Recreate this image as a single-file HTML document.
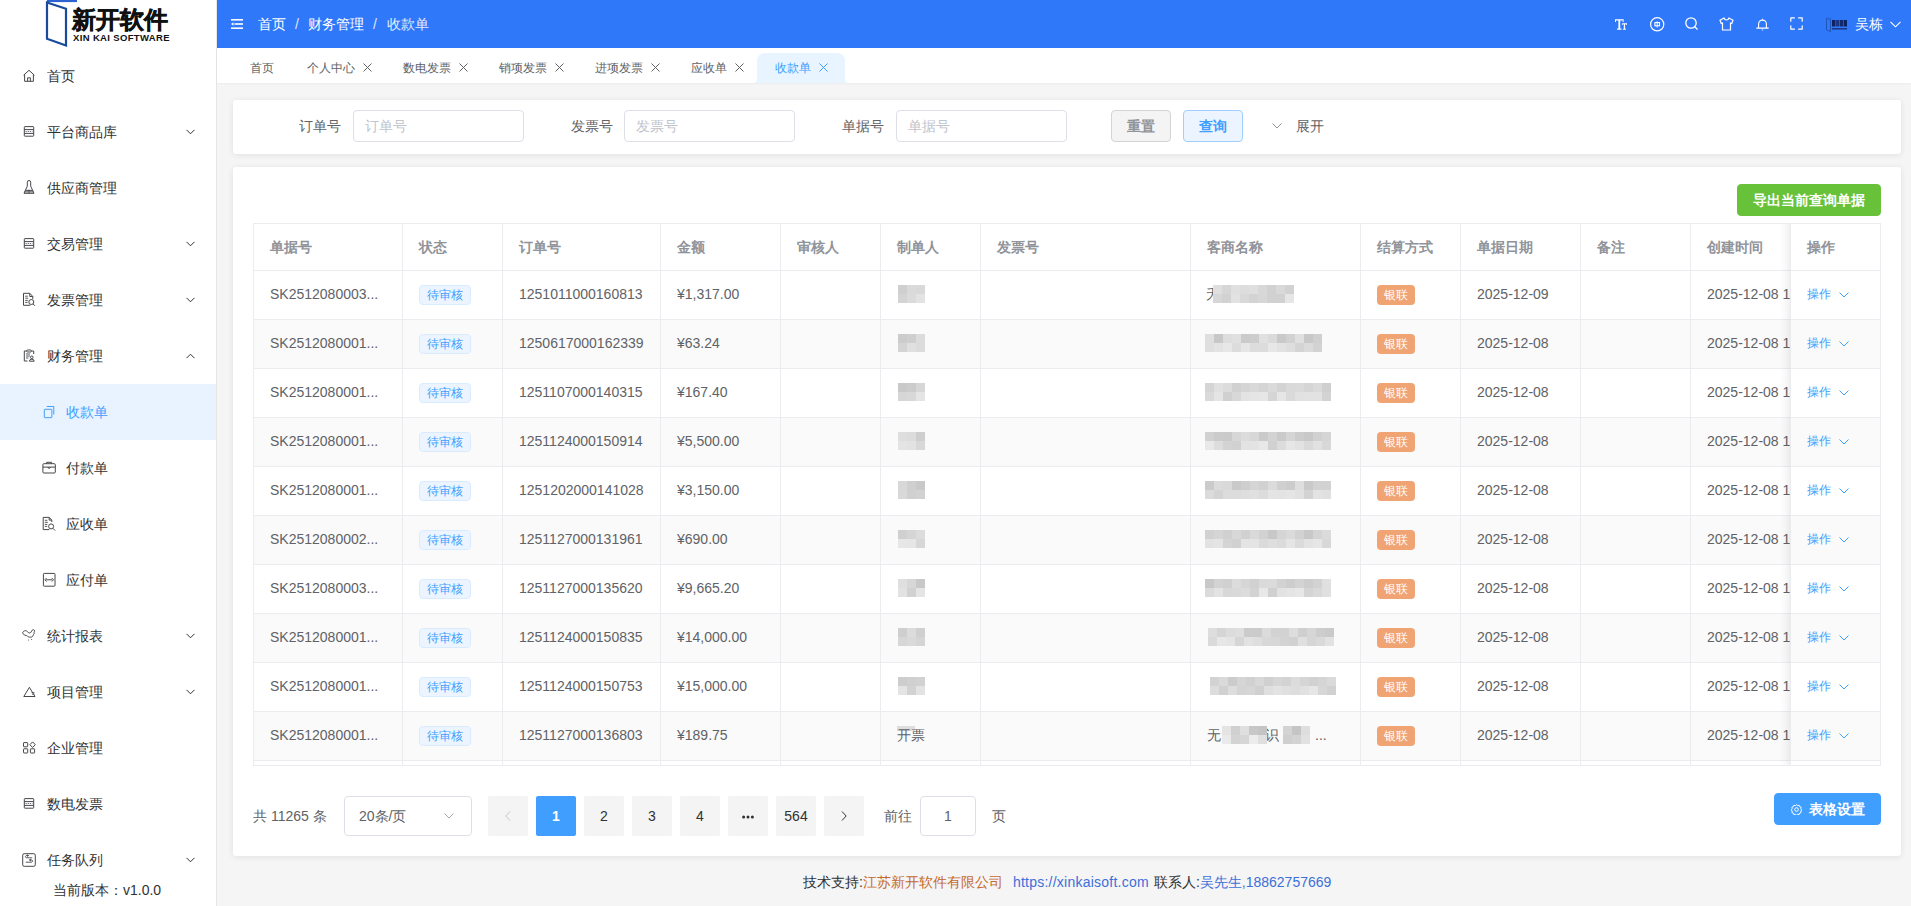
<!DOCTYPE html>
<html><head><meta charset="utf-8"><title>收款单</title>
<style>
*{box-sizing:border-box;margin:0;padding:0}
html,body{width:1911px;height:906px;overflow:hidden}
body{font-family:"Liberation Sans",sans-serif;font-size:14px;color:#606266;background:#f5f5f5;position:relative}
.abs{position:absolute}
#side{position:absolute;left:0;top:0;width:217px;height:906px;background:#fff;border-right:1px solid #e6e6e6}
.mi{position:absolute;left:0;width:216px;height:56px;color:#303133;font-size:14px}
.mi .ic{position:absolute;left:22px;top:21px;width:14px;height:14px;line-height:0}
.mi .tx{position:absolute;left:47px;top:0;line-height:56px;white-space:nowrap}
.mi.sub .ic{left:42px}
.mi.sub .tx{left:66px}
.mi .ch{position:absolute;left:186px;top:25px;width:9px;height:6px;line-height:0}
.mi.act{background:#e8f3ff;color:#409eff}
#hdr{position:absolute;left:217px;top:0;width:1694px;height:48px;background:#3078fa;color:#fff}
#tabs{position:absolute;left:217px;top:48px;width:1694px;height:35px;background:#fff;box-shadow:0 1px 2px rgba(0,0,0,.04)}
.tab{position:absolute;top:3px;height:34px;line-height:34px;font-size:12px;color:#606266;white-space:nowrap}
.tab .x{display:inline-block;vertical-align:middle;margin-left:8px;width:9px;height:9px;line-height:0;position:relative;top:-1px}
.card{position:absolute;left:233px;width:1668px;background:#fff;border-radius:3px;box-shadow:0 1px 6px rgba(0,0,0,.09)}
.lbl{position:absolute;top:10px;line-height:32px;font-size:14px;color:#606266}
.inp{position:absolute;top:10px;height:32px;width:171px;border:1px solid #dcdfe6;border-radius:4px;line-height:30px;padding-left:11px;color:#c0c4cc;font-size:14px}
.btn{position:absolute;height:32px;line-height:30px;text-align:center;border-radius:4px;font-size:14px;font-weight:bold}
#tbl{position:absolute;left:253px;top:223px;width:1628px;height:543px;overflow:hidden;border:1px solid #eaecf0;border-right:none}
.cell{position:absolute;height:49px;line-height:46px;white-space:nowrap;overflow:hidden;border-right:1px solid #eaecf0;border-bottom:1px solid #eaecf0;padding-left:16px;font-size:14px;color:#606266}
.hcell{color:#909399;font-weight:bold;height:47px;line-height:46px}
.tag{display:inline-block;vertical-align:middle;height:20px;line-height:18px;padding:0 7px;font-size:12px;border-radius:4px;border:1px solid #d9ecff;background:#ecf5ff;color:#409eff;position:relative;top:0px}
.tag2{display:inline-block;vertical-align:middle;height:20px;line-height:20px;padding:0 7px;font-size:12px;border-radius:4px;background:#f0a373;color:#fff;position:relative;top:0px}
.blk{position:absolute;height:18px}
.pg{position:absolute;top:796px;width:40px;height:40px;line-height:40px;text-align:center;background:#f4f4f5;color:#303133;font-size:14px;border-radius:2px}
</style></head><body>

<div id="side">
<svg class="abs" style="left:44px;top:0" width="36" height="48" viewBox="0 0 36 48">
<path d="M3 1H33" stroke="#2b64d0" stroke-width="2.2" fill="none"/>
<path d="M3 2.5L22 8.8V45.5L3 38.8Z" stroke="#1a4a9c" stroke-width="2.2" fill="none"/>
</svg>
<div class="abs" style="left:72px;top:6px;font-size:24px;font-weight:bold;color:#111;line-height:28px;white-space:nowrap;letter-spacing:0px;-webkit-text-stroke:0.5px #111">新开软件</div>
<div class="abs" style="left:73px;top:33px;font-size:9.5px;font-weight:bold;color:#111;line-height:10px;white-space:nowrap;letter-spacing:0.35px">XIN KAI SOFTWARE</div>
<div class="mi" style="top:48px"><div class="ic"><svg width="14" height="14" viewBox="0 0 14 14" style="overflow:visible" fill="none" stroke="#45474b" stroke-width="1"><path d="M1.6 6.2L7 1.3l5.4 4.9"/><path d="M2.6 5.4V12.3h8.8V5.4"/><path d="M5.6 12.3V8.8h2.8v3.5"/></svg></div><div class="tx">首页</div></div>
<div class="mi" style="top:104px"><div class="ic"><svg width="14" height="14" viewBox="0 0 14 14" style="overflow:visible" fill="none" stroke="#45474b" stroke-width="1"><rect x="2.3" y="1.6" width="9.4" height="9.6" rx="0.6"/><path d="M2.3 4.6h9.4M2.3 8.4h9.4"/><path d="M3.5 6.5h7" stroke-dasharray="1.2 1" stroke-width="0.8"/></svg></div><div class="tx">平台商品库</div><div class="ch"><svg width="9" height="6" viewBox="0 0 9 6" fill="none" stroke="#303133" stroke-width="1"><path d="M0.5 0.8L4.5 4.8 8.5 0.8"/></svg></div></div>
<div class="mi" style="top:160px"><div class="ic"><svg width="14" height="14" viewBox="0 0 14 14" style="overflow:visible" fill="none" stroke="#45474b" stroke-width="1"><path d="M5.3 1.2a1.7 1.7 0 0 1 3.4 0V5.2L12 12.3H2L5.3 5.2z"/><path d="M3.3 9.4h7.4M2.6 10.9h8.8"/><path d="M7 8.6v3.7" stroke-width="0.8"/></svg></div><div class="tx">供应商管理</div></div>
<div class="mi" style="top:216px"><div class="ic"><svg width="14" height="14" viewBox="0 0 14 14" style="overflow:visible" fill="none" stroke="#45474b" stroke-width="1"><rect x="2.3" y="1.6" width="9.4" height="9.6" rx="0.6"/><path d="M2.3 4.6h9.4M2.3 8.4h9.4"/><path d="M3.5 6.5h7" stroke-dasharray="1.2 1" stroke-width="0.8"/></svg></div><div class="tx">交易管理</div><div class="ch"><svg width="9" height="6" viewBox="0 0 9 6" fill="none" stroke="#303133" stroke-width="1"><path d="M0.5 0.8L4.5 4.8 8.5 0.8"/></svg></div></div>
<div class="mi" style="top:272px"><div class="ic"><svg width="14" height="14" viewBox="0 0 14 14" style="overflow:visible" fill="none" stroke="#45474b" stroke-width="1"><path d="M8.2 12.3H1.5V0.3h6.3l3 3.2V6"/><path d="M7.8 0.3v3.2h3"/><path d="M3.2 3.2h2.6M3.2 5.2h3M3.2 7.4h2.6M3.2 9.4h2.4" stroke-width="0.9"/><circle cx="9.3" cy="9" r="2.5"/><path d="M11.1 10.9l1.8 1.9"/></svg></div><div class="tx">发票管理</div><div class="ch"><svg width="9" height="6" viewBox="0 0 9 6" fill="none" stroke="#303133" stroke-width="1"><path d="M0.5 0.8L4.5 4.8 8.5 0.8"/></svg></div></div>
<div class="mi" style="top:328px"><div class="ic"><svg width="14" height="14" viewBox="0 0 14 14" style="overflow:visible" fill="none" stroke="#45474b" stroke-width="1"><path d="M4.6 2H2.3v10h3.2M9.4 2h2.3v3"/><rect x="4.6" y="1" width="4.8" height="2" rx="1"/><path d="M4 5h4M4 7h4M4 9h2.4" stroke-width="0.9"/><circle cx="9.8" cy="8.3" r="1.3"/><path d="M7.4 12.2a2.4 2 0 0 1 4.8 0z"/></svg></div><div class="tx">财务管理</div><div class="ch"><svg width="9" height="6" viewBox="0 0 9 6" fill="none" stroke="#303133" stroke-width="1"><path d="M0.5 5.2L4.5 1.2 8.5 5.2"/></svg></div></div>
<div class="mi sub act" style="top:384px"><div class="ic"><svg width="14" height="14" viewBox="0 0 14 14" style="overflow:visible" fill="none" stroke="#409eff" stroke-width="1"><rect x="2.3" y="4.3" width="7.6" height="8.4" rx="0.6"/><path d="M4.8 1.5h7v8"/></svg></div><div class="tx">收款单</div></div>
<div class="mi sub" style="top:440px"><div class="ic"><svg width="14" height="14" viewBox="0 0 14 14" style="overflow:visible" fill="none" stroke="#45474b" stroke-width="1"><rect x="0.9" y="2.7" width="12.4" height="9.3" rx="1"/><path d="M4.6 2.7V1.3h5v1.4M0.9 6.1h12.4"/><path d="M5.9 6.1a1.2 1.2 0 0 0 2.4 0"/></svg></div><div class="tx">付款单</div></div>
<div class="mi sub" style="top:496px"><div class="ic"><svg width="14" height="14" viewBox="0 0 14 14" style="overflow:visible" fill="none" stroke="#45474b" stroke-width="1"><path d="M7.3 12.6H1.2V0.4h6l2.6 2.7V5"/><path d="M7.2 0.4v2.7h2.6"/><path d="M2.8 3.3h2.6M2.8 5.3h3M2.8 7.4h2.6M2.8 9.4h2.4" stroke-width="0.9"/><circle cx="9.1" cy="9.4" r="2.5"/><path d="M10.9 11.3l2.2 2.2"/></svg></div><div class="tx">应收单</div></div>
<div class="mi sub" style="top:552px"><div class="ic"><svg width="14" height="14" viewBox="0 0 14 14" style="overflow:visible" fill="none" stroke="#45474b" stroke-width="1"><rect x="1.4" y="0.4" width="11.6" height="12.8" rx="0.8"/><path d="M4.6 5L2.9 6.8l1.7 1.8M9.8 5l1.7 1.8-1.7 1.8M4.2 6.8h6"/></svg></div><div class="tx">应付单</div></div>
<div class="mi" style="top:608px"><div class="ic"><svg width="14" height="14" viewBox="0 0 14 14" style="overflow:visible" fill="none" stroke="#45474b" stroke-width="1"><path d="M0.8 3.2c1-1.3 2.6-2 3.8-1.2 1.2.8 1.8 2.1 3.2 2 1.2-.1 1.6-1.7 2.4-2.8.6-.8 1.8-.6 2.3.2.5.9-.6 1.6-.4 2.6.2 1-.9 1.6-1.1 2.6-.2 1.2-1.4 1.6-2.7 1.6-1.2 0-2.2-.2-2.8-1.1C5 6.3 3.8 6.6 2.8 6.1 1.6 5.5.2 4.4.8 3.2z"/><circle cx="6.6" cy="11" r="0.5" fill="#45474b" stroke="none"/><circle cx="9.6" cy="10.4" r="0.5" fill="#45474b" stroke="none"/></svg></div><div class="tx">统计报表</div><div class="ch"><svg width="9" height="6" viewBox="0 0 9 6" fill="none" stroke="#303133" stroke-width="1"><path d="M0.5 0.8L4.5 4.8 8.5 0.8"/></svg></div></div>
<div class="mi" style="top:664px"><div class="ic"><svg width="14" height="14" viewBox="0 0 14 14" style="overflow:visible" fill="none" stroke="#45474b" stroke-width="1"><path d="M7.4 2.3L13 11.5H1.8z"/><path d="M9.5 7.6h3M10 9.2h2.4" stroke-width="0.8"/></svg></div><div class="tx">项目管理</div><div class="ch"><svg width="9" height="6" viewBox="0 0 9 6" fill="none" stroke="#303133" stroke-width="1"><path d="M0.5 0.8L4.5 4.8 8.5 0.8"/></svg></div></div>
<div class="mi" style="top:720px"><div class="ic"><svg width="14" height="14" viewBox="0 0 14 14" style="overflow:visible" fill="none" stroke="#45474b" stroke-width="1"><rect x="1.5" y="1.6" width="4.2" height="4.2" rx="0.5"/><path d="M10.6 0.9l2.7 2.8-2.7 2.8-2.7-2.8z"/><rect x="1.5" y="7.8" width="4.2" height="4.2" rx="0.5"/><rect x="8.4" y="7.8" width="4.2" height="4.2" rx="0.5"/></svg></div><div class="tx">企业管理</div></div>
<div class="mi" style="top:776px"><div class="ic"><svg width="14" height="14" viewBox="0 0 14 14" style="overflow:visible" fill="none" stroke="#45474b" stroke-width="1"><rect x="2.3" y="1.6" width="9.4" height="9.6" rx="0.6"/><path d="M2.3 4.6h9.4M2.3 8.4h9.4"/><path d="M3.5 6.5h7" stroke-dasharray="1.2 1" stroke-width="0.8"/></svg></div><div class="tx">数电发票</div></div>
<div class="mi" style="top:832px"><div class="ic"><svg width="14" height="14" viewBox="0 0 14 14" style="overflow:visible" fill="none" stroke="#45474b" stroke-width="1"><rect x="0.7" y="0.7" width="12.6" height="12.6" rx="1.5"/><path d="M10.2 4.8H4.2a1.4 1.4 0 0 1 0-2.3h2.2M3.8 9.2h6a1.4 1.4 0 0 0 0-2.3H7.6M5 1.8l1.6 0.8L5 3.6M9 6.2l-1.6 0.8L9 8" stroke-width="0.9"/></svg></div><div class="tx">任务队列</div><div class="ch"><svg width="9" height="6" viewBox="0 0 9 6" fill="none" stroke="#303133" stroke-width="1"><path d="M0.5 0.8L4.5 4.8 8.5 0.8"/></svg></div></div>
<div class="abs" style="left:53px;top:882px;font-size:14px;color:#303133;line-height:16px;white-space:nowrap">当前版本：v1.0.0</div>
</div>
<div id="hdr">
<svg class="abs" style="left:14px;top:19px" width="12" height="10" viewBox="0 0 12 10" fill="#fff"><rect x="0" y="0" width="12" height="1.6"/><rect x="3.5" y="4.2" width="8.5" height="1.6"/><rect x="0" y="8.4" width="12" height="1.6"/><path d="M0 5L2.5 3.2V6.8Z"/></svg>
<div class="abs" style="left:41px;top:16px;line-height:16px;font-size:14px;color:#fff;white-space:nowrap">首页<span style="margin:0 9px;color:#dfe9fd">/</span>财务管理<span style="margin:0 10px 0 9px;color:#dfe9fd">/</span><span style="color:#e3ecfd">收款单</span></div>
<div class="abs" style="left:1398px;top:19px;width:12px;height:11px;line-height:0"><svg width="12" height="11" viewBox="0 0 12 11" fill="#fff"><path d="M0 0.3h8.6v2.6H7.7V1.5H5.2V9.6h1.3V10.7H2.1V9.6h1.3V1.5H0.9v1.4H0z"/><path d="M7.2 4.3h4.8v1.8h-.7V5.3H10.1v4.4h.8v1h-2.9v-1h.8V5.3H7.9v.8h-.7z"/></svg></div>
<div class="abs" style="left:1433px;top:16.5px;line-height:0"><svg width="15" height="15" viewBox="0 0 15 15" fill="none" stroke="#fff" stroke-width="1.2"><circle cx="7.2" cy="7.3" r="6.6"/><rect x="4.9" y="5.6" width="4.6" height="3.2" stroke-width="1.1"/><path d="M7.2 4.3v6.3" stroke-width="0.9"/></svg></div>
<div class="abs" style="left:1468px;top:17px;line-height:0"><svg width="13" height="13" viewBox="0 0 13 13" fill="none" stroke="#fff" stroke-width="1.3"><circle cx="6" cy="6" r="5.2"/><path d="M9.8 9.8L12.5 12.5"/></svg></div>
<div class="abs" style="left:1502px;top:17px;line-height:0"><svg width="15" height="14" viewBox="0 0 15 14" fill="none" stroke="#fff" stroke-width="1.2"><path d="M5 1L1 3.2 2.2 6.5 3.5 6V13h8V6l1.3.5L14 3.2 10 1C9.5 2.5 8.5 3 7.5 3S5.5 2.5 5 1z"/></svg></div>
<div class="abs" style="left:1539px;top:17.5px;line-height:0"><svg width="13" height="13" viewBox="0 0 13 13" fill="none" stroke="#fff" stroke-width="1.1"><path d="M0.3 10.1h12.4M2.6 10.1V6a3.9 3.9 0 0 1 7.8 0v4.1"/><path d="M6.5 0.7v1" /><path d="M5.8 11.9h1.4" stroke-width="0.9"/></svg></div>
<div class="abs" style="left:1573px;top:17px;line-height:0"><svg width="13" height="13" viewBox="0 0 13 13" fill="none" stroke="#fff" stroke-width="1.2" stroke-linecap="round" stroke-linejoin="round"><path d="M0.8 4.2V0.8h3.6M8.6 0.8h3.6v3.4M12.2 8.8v3.4H8.6M4.4 12.2H0.8V8.8"/></svg></div>
<div class="abs" style="left:1608px;top:17px;width:24px;height:16px;line-height:0"><svg width="24" height="16" viewBox="0 0 24 16"><path d="M1.5 1.2L5.5 2.8V14.5L1.5 12.8Z" fill="none" stroke="#1f55b8" stroke-width="1"/><path d="M1.2 1.2h5" stroke="#2a66d0" stroke-width="1"/><rect x="7" y="3" width="3.4" height="6.5" fill="#0d2260"/><rect x="11" y="3" width="3.2" height="6.5" fill="#183585"/><rect x="14.8" y="3" width="3.2" height="6.5" fill="#122a70"/><rect x="18.6" y="3" width="3.4" height="6.5" fill="#0d2260"/><rect x="7" y="11" width="15" height="1.6" fill="#1a3a88"/></svg></div>
<div class="abs" style="left:1638px;top:16px;line-height:16px;font-size:14px;color:#fff;white-space:nowrap">吴栋</div>
<div class="abs" style="left:1673px;top:21px;line-height:0"><svg width="11" height="7" viewBox="0 0 11 7" fill="none" stroke="#fff" stroke-width="1.1"><path d="M0.5 0.8L5.5 5.8 10.5 0.8"/></svg></div>
</div>
<div id="tabs">
<div class="abs" style="left:532px;top:5px;width:104px;height:30px;overflow:hidden"><div class="abs" style="left:8px;top:0;width:88px;height:30px;background:#e8f4ff;border-radius:8px 8px 0 0"></div><div class="abs" style="left:4px;top:26px;width:8px;height:4px;background:#e8f4ff"></div><div class="abs" style="left:-4px;top:18px;width:12px;height:12px;background:#fff;border-radius:0 0 4px 0"></div><div class="abs" style="left:92px;top:26px;width:8px;height:4px;background:#e8f4ff"></div><div class="abs" style="left:96px;top:18px;width:12px;height:12px;background:#fff;border-radius:0 0 0 4px"></div></div>
<div class="tab" style="left:33px;color:#606266">首页</div>
<div class="tab" style="left:90px;color:#606266">个人中心<span class="x"><svg width="9" height="9" viewBox="0 0 9 9" stroke="#606266" stroke-width="1"><path d="M0.5 0.5L8.5 8.5M8.5 0.5L0.5 8.5"/></svg></span></div>
<div class="tab" style="left:186px;color:#606266">数电发票<span class="x"><svg width="9" height="9" viewBox="0 0 9 9" stroke="#606266" stroke-width="1"><path d="M0.5 0.5L8.5 8.5M8.5 0.5L0.5 8.5"/></svg></span></div>
<div class="tab" style="left:282px;color:#606266">销项发票<span class="x"><svg width="9" height="9" viewBox="0 0 9 9" stroke="#606266" stroke-width="1"><path d="M0.5 0.5L8.5 8.5M8.5 0.5L0.5 8.5"/></svg></span></div>
<div class="tab" style="left:378px;color:#606266">进项发票<span class="x"><svg width="9" height="9" viewBox="0 0 9 9" stroke="#606266" stroke-width="1"><path d="M0.5 0.5L8.5 8.5M8.5 0.5L0.5 8.5"/></svg></span></div>
<div class="tab" style="left:474px;color:#606266">应收单<span class="x"><svg width="9" height="9" viewBox="0 0 9 9" stroke="#606266" stroke-width="1"><path d="M0.5 0.5L8.5 8.5M8.5 0.5L0.5 8.5"/></svg></span></div>
<div class="tab" style="left:558px;color:#409eff">收款单<span class="x"><svg width="9" height="9" viewBox="0 0 9 9" stroke="#409eff" stroke-width="1"><path d="M0.5 0.5L8.5 8.5M8.5 0.5L0.5 8.5"/></svg></span></div>
</div>
<div class="card" style="top:100px;height:54px">
<div class="lbl" style="left:66px">订单号</div>
<div class="inp" style="left:120px">订单号</div>
<div class="lbl" style="left:338px">发票号</div>
<div class="inp" style="left:391px">发票号</div>
<div class="lbl" style="left:609px">单据号</div>
<div class="inp" style="left:663px">单据号</div>
<div class="btn" style="left:878px;top:10px;width:60px;background:#f4f4f5;border:1px solid #d3d4d6;color:#909399">重置</div>
<div class="btn" style="left:950px;top:10px;width:60px;background:#ecf5ff;border:1px solid #a0cfff;color:#409eff">查询</div>
<div class="abs" style="left:1039px;top:23px;line-height:0"><svg width="10" height="6" viewBox="0 0 10 6" fill="none" stroke="#909399" stroke-width="1"><path d="M0.5 0.5L5 5 9.5 0.5"/></svg></div>
<div class="lbl" style="left:1063px">展开</div>
</div>
<div class="card" style="top:167px;height:689px">
<div class="btn" style="left:1504px;top:17px;width:144px;background:#67c23a;border:1px solid #67c23a;color:#fff">导出当前查询单据</div>
<div class="btn" style="left:1541px;top:626px;width:107px;background:#409eff;border:1px solid #409eff;color:#fff"><svg style="position:relative;top:1px;margin-right:7px" width="11" height="11" viewBox="0 0 11 11" fill="none" stroke="#fff" stroke-width="1"><circle cx="5.5" cy="5.5" r="1.8"/><path d="M5.5 0.7l1.2.9 1.5-.3.5 1.4 1.4.5-.3 1.5.9 1.2-.9 1.2.3 1.5-1.4.5-.5 1.4-1.5-.3-1.2.9-1.2-.9-1.5.3-.5-1.4-1.4-.5.3-1.5-.9-1.2.9-1.2-.3-1.5 1.4-.5.5-1.4 1.5.3z"/></svg>表格设置</div>
</div>
<div id="tbl">
<div class="cell hcell" style="left:0px;top:0px;width:149px">单据号</div>
<div class="cell hcell" style="left:149px;top:0px;width:100px">状态</div>
<div class="cell hcell" style="left:249px;top:0px;width:158px">订单号</div>
<div class="cell hcell" style="left:407px;top:0px;width:120px">金额</div>
<div class="cell hcell" style="left:527px;top:0px;width:100px">审核人</div>
<div class="cell hcell" style="left:627px;top:0px;width:100px">制单人</div>
<div class="cell hcell" style="left:727px;top:0px;width:210px">发票号</div>
<div class="cell hcell" style="left:937px;top:0px;width:170px">客商名称</div>
<div class="cell hcell" style="left:1107px;top:0px;width:100px">结算方式</div>
<div class="cell hcell" style="left:1207px;top:0px;width:120px">单据日期</div>
<div class="cell hcell" style="left:1327px;top:0px;width:110px">备注</div>
<div class="cell hcell" style="left:1437px;top:0px;width:100px">创建时间</div>
<div class="cell hcell" style="left:1537px;top:0px;width:90px">操作</div>
<div class="cell" style="left:0px;top:47px;width:149px;background:#fff">SK2512080003...</div>
<div class="cell" style="left:149px;top:47px;width:100px;background:#fff"><span class="tag">待审核</span></div>
<div class="cell" style="left:249px;top:47px;width:158px;background:#fff">1251011000160813</div>
<div class="cell" style="left:407px;top:47px;width:120px;background:#fff">¥1,317.00</div>
<div class="cell" style="left:527px;top:47px;width:100px;background:#fff"></div>
<div class="cell" style="left:627px;top:47px;width:100px;background:#fff"></div>
<div class="cell" style="left:727px;top:47px;width:210px;background:#fff"></div>
<div class="cell" style="left:937px;top:47px;width:170px;background:#fff"></div>
<div class="cell" style="left:1107px;top:47px;width:100px;background:#fff"><span class="tag2">银联</span></div>
<div class="cell" style="left:1207px;top:47px;width:120px;background:#fff">2025-12-09</div>
<div class="cell" style="left:1327px;top:47px;width:110px;background:#fff"></div>
<div class="cell" style="left:1437px;top:47px;width:100px;background:#fff">2025-12-08 1</div>
<div class="cell" style="left:1537px;top:47px;width:90px;background:#fff"></div>
<div class="cell" style="left:0px;top:96px;width:149px;background:#fafafa">SK2512080001...</div>
<div class="cell" style="left:149px;top:96px;width:100px;background:#fafafa"><span class="tag">待审核</span></div>
<div class="cell" style="left:249px;top:96px;width:158px;background:#fafafa">1250617000162339</div>
<div class="cell" style="left:407px;top:96px;width:120px;background:#fafafa">¥63.24</div>
<div class="cell" style="left:527px;top:96px;width:100px;background:#fafafa"></div>
<div class="cell" style="left:627px;top:96px;width:100px;background:#fafafa"></div>
<div class="cell" style="left:727px;top:96px;width:210px;background:#fafafa"></div>
<div class="cell" style="left:937px;top:96px;width:170px;background:#fafafa"></div>
<div class="cell" style="left:1107px;top:96px;width:100px;background:#fafafa"><span class="tag2">银联</span></div>
<div class="cell" style="left:1207px;top:96px;width:120px;background:#fafafa">2025-12-08</div>
<div class="cell" style="left:1327px;top:96px;width:110px;background:#fafafa"></div>
<div class="cell" style="left:1437px;top:96px;width:100px;background:#fafafa">2025-12-08 1</div>
<div class="cell" style="left:1537px;top:96px;width:90px;background:#fafafa"></div>
<div class="cell" style="left:0px;top:145px;width:149px;background:#fff">SK2512080001...</div>
<div class="cell" style="left:149px;top:145px;width:100px;background:#fff"><span class="tag">待审核</span></div>
<div class="cell" style="left:249px;top:145px;width:158px;background:#fff">1251107000140315</div>
<div class="cell" style="left:407px;top:145px;width:120px;background:#fff">¥167.40</div>
<div class="cell" style="left:527px;top:145px;width:100px;background:#fff"></div>
<div class="cell" style="left:627px;top:145px;width:100px;background:#fff"></div>
<div class="cell" style="left:727px;top:145px;width:210px;background:#fff"></div>
<div class="cell" style="left:937px;top:145px;width:170px;background:#fff"></div>
<div class="cell" style="left:1107px;top:145px;width:100px;background:#fff"><span class="tag2">银联</span></div>
<div class="cell" style="left:1207px;top:145px;width:120px;background:#fff">2025-12-08</div>
<div class="cell" style="left:1327px;top:145px;width:110px;background:#fff"></div>
<div class="cell" style="left:1437px;top:145px;width:100px;background:#fff">2025-12-08 1</div>
<div class="cell" style="left:1537px;top:145px;width:90px;background:#fff"></div>
<div class="cell" style="left:0px;top:194px;width:149px;background:#fafafa">SK2512080001...</div>
<div class="cell" style="left:149px;top:194px;width:100px;background:#fafafa"><span class="tag">待审核</span></div>
<div class="cell" style="left:249px;top:194px;width:158px;background:#fafafa">1251124000150914</div>
<div class="cell" style="left:407px;top:194px;width:120px;background:#fafafa">¥5,500.00</div>
<div class="cell" style="left:527px;top:194px;width:100px;background:#fafafa"></div>
<div class="cell" style="left:627px;top:194px;width:100px;background:#fafafa"></div>
<div class="cell" style="left:727px;top:194px;width:210px;background:#fafafa"></div>
<div class="cell" style="left:937px;top:194px;width:170px;background:#fafafa"></div>
<div class="cell" style="left:1107px;top:194px;width:100px;background:#fafafa"><span class="tag2">银联</span></div>
<div class="cell" style="left:1207px;top:194px;width:120px;background:#fafafa">2025-12-08</div>
<div class="cell" style="left:1327px;top:194px;width:110px;background:#fafafa"></div>
<div class="cell" style="left:1437px;top:194px;width:100px;background:#fafafa">2025-12-08 1</div>
<div class="cell" style="left:1537px;top:194px;width:90px;background:#fafafa"></div>
<div class="cell" style="left:0px;top:243px;width:149px;background:#fff">SK2512080001...</div>
<div class="cell" style="left:149px;top:243px;width:100px;background:#fff"><span class="tag">待审核</span></div>
<div class="cell" style="left:249px;top:243px;width:158px;background:#fff">1251202000141028</div>
<div class="cell" style="left:407px;top:243px;width:120px;background:#fff">¥3,150.00</div>
<div class="cell" style="left:527px;top:243px;width:100px;background:#fff"></div>
<div class="cell" style="left:627px;top:243px;width:100px;background:#fff"></div>
<div class="cell" style="left:727px;top:243px;width:210px;background:#fff"></div>
<div class="cell" style="left:937px;top:243px;width:170px;background:#fff"></div>
<div class="cell" style="left:1107px;top:243px;width:100px;background:#fff"><span class="tag2">银联</span></div>
<div class="cell" style="left:1207px;top:243px;width:120px;background:#fff">2025-12-08</div>
<div class="cell" style="left:1327px;top:243px;width:110px;background:#fff"></div>
<div class="cell" style="left:1437px;top:243px;width:100px;background:#fff">2025-12-08 1</div>
<div class="cell" style="left:1537px;top:243px;width:90px;background:#fff"></div>
<div class="cell" style="left:0px;top:292px;width:149px;background:#fafafa">SK2512080002...</div>
<div class="cell" style="left:149px;top:292px;width:100px;background:#fafafa"><span class="tag">待审核</span></div>
<div class="cell" style="left:249px;top:292px;width:158px;background:#fafafa">1251127000131961</div>
<div class="cell" style="left:407px;top:292px;width:120px;background:#fafafa">¥690.00</div>
<div class="cell" style="left:527px;top:292px;width:100px;background:#fafafa"></div>
<div class="cell" style="left:627px;top:292px;width:100px;background:#fafafa"></div>
<div class="cell" style="left:727px;top:292px;width:210px;background:#fafafa"></div>
<div class="cell" style="left:937px;top:292px;width:170px;background:#fafafa"></div>
<div class="cell" style="left:1107px;top:292px;width:100px;background:#fafafa"><span class="tag2">银联</span></div>
<div class="cell" style="left:1207px;top:292px;width:120px;background:#fafafa">2025-12-08</div>
<div class="cell" style="left:1327px;top:292px;width:110px;background:#fafafa"></div>
<div class="cell" style="left:1437px;top:292px;width:100px;background:#fafafa">2025-12-08 1</div>
<div class="cell" style="left:1537px;top:292px;width:90px;background:#fafafa"></div>
<div class="cell" style="left:0px;top:341px;width:149px;background:#fff">SK2512080003...</div>
<div class="cell" style="left:149px;top:341px;width:100px;background:#fff"><span class="tag">待审核</span></div>
<div class="cell" style="left:249px;top:341px;width:158px;background:#fff">1251127000135620</div>
<div class="cell" style="left:407px;top:341px;width:120px;background:#fff">¥9,665.20</div>
<div class="cell" style="left:527px;top:341px;width:100px;background:#fff"></div>
<div class="cell" style="left:627px;top:341px;width:100px;background:#fff"></div>
<div class="cell" style="left:727px;top:341px;width:210px;background:#fff"></div>
<div class="cell" style="left:937px;top:341px;width:170px;background:#fff"></div>
<div class="cell" style="left:1107px;top:341px;width:100px;background:#fff"><span class="tag2">银联</span></div>
<div class="cell" style="left:1207px;top:341px;width:120px;background:#fff">2025-12-08</div>
<div class="cell" style="left:1327px;top:341px;width:110px;background:#fff"></div>
<div class="cell" style="left:1437px;top:341px;width:100px;background:#fff">2025-12-08 1</div>
<div class="cell" style="left:1537px;top:341px;width:90px;background:#fff"></div>
<div class="cell" style="left:0px;top:390px;width:149px;background:#fafafa">SK2512080001...</div>
<div class="cell" style="left:149px;top:390px;width:100px;background:#fafafa"><span class="tag">待审核</span></div>
<div class="cell" style="left:249px;top:390px;width:158px;background:#fafafa">1251124000150835</div>
<div class="cell" style="left:407px;top:390px;width:120px;background:#fafafa">¥14,000.00</div>
<div class="cell" style="left:527px;top:390px;width:100px;background:#fafafa"></div>
<div class="cell" style="left:627px;top:390px;width:100px;background:#fafafa"></div>
<div class="cell" style="left:727px;top:390px;width:210px;background:#fafafa"></div>
<div class="cell" style="left:937px;top:390px;width:170px;background:#fafafa"></div>
<div class="cell" style="left:1107px;top:390px;width:100px;background:#fafafa"><span class="tag2">银联</span></div>
<div class="cell" style="left:1207px;top:390px;width:120px;background:#fafafa">2025-12-08</div>
<div class="cell" style="left:1327px;top:390px;width:110px;background:#fafafa"></div>
<div class="cell" style="left:1437px;top:390px;width:100px;background:#fafafa">2025-12-08 1</div>
<div class="cell" style="left:1537px;top:390px;width:90px;background:#fafafa"></div>
<div class="cell" style="left:0px;top:439px;width:149px;background:#fff">SK2512080001...</div>
<div class="cell" style="left:149px;top:439px;width:100px;background:#fff"><span class="tag">待审核</span></div>
<div class="cell" style="left:249px;top:439px;width:158px;background:#fff">1251124000150753</div>
<div class="cell" style="left:407px;top:439px;width:120px;background:#fff">¥15,000.00</div>
<div class="cell" style="left:527px;top:439px;width:100px;background:#fff"></div>
<div class="cell" style="left:627px;top:439px;width:100px;background:#fff"></div>
<div class="cell" style="left:727px;top:439px;width:210px;background:#fff"></div>
<div class="cell" style="left:937px;top:439px;width:170px;background:#fff"></div>
<div class="cell" style="left:1107px;top:439px;width:100px;background:#fff"><span class="tag2">银联</span></div>
<div class="cell" style="left:1207px;top:439px;width:120px;background:#fff">2025-12-08</div>
<div class="cell" style="left:1327px;top:439px;width:110px;background:#fff"></div>
<div class="cell" style="left:1437px;top:439px;width:100px;background:#fff">2025-12-08 1</div>
<div class="cell" style="left:1537px;top:439px;width:90px;background:#fff"></div>
<div class="cell" style="left:0px;top:488px;width:149px;background:#fafafa">SK2512080001...</div>
<div class="cell" style="left:149px;top:488px;width:100px;background:#fafafa"><span class="tag">待审核</span></div>
<div class="cell" style="left:249px;top:488px;width:158px;background:#fafafa">1251127000136803</div>
<div class="cell" style="left:407px;top:488px;width:120px;background:#fafafa">¥189.75</div>
<div class="cell" style="left:527px;top:488px;width:100px;background:#fafafa"></div>
<div class="cell" style="left:627px;top:488px;width:100px;background:#fafafa"></div>
<div class="cell" style="left:727px;top:488px;width:210px;background:#fafafa"></div>
<div class="cell" style="left:937px;top:488px;width:170px;background:#fafafa"></div>
<div class="cell" style="left:1107px;top:488px;width:100px;background:#fafafa"><span class="tag2">银联</span></div>
<div class="cell" style="left:1207px;top:488px;width:120px;background:#fafafa">2025-12-08</div>
<div class="cell" style="left:1327px;top:488px;width:110px;background:#fafafa"></div>
<div class="cell" style="left:1437px;top:488px;width:100px;background:#fafafa">2025-12-08 1</div>
<div class="cell" style="left:1537px;top:488px;width:90px;background:#fafafa"></div>
<div class="cell" style="left:0px;top:537px;width:149px;background:#fff">SK2512080001...</div>
<div class="cell" style="left:149px;top:537px;width:100px;background:#fff"><span class="tag">待审核</span></div>
<div class="cell" style="left:249px;top:537px;width:158px;background:#fff">1251127000136803</div>
<div class="cell" style="left:407px;top:537px;width:120px;background:#fff">¥189.75</div>
<div class="cell" style="left:527px;top:537px;width:100px;background:#fff"></div>
<div class="cell" style="left:627px;top:537px;width:100px;background:#fff"></div>
<div class="cell" style="left:727px;top:537px;width:210px;background:#fff"></div>
<div class="cell" style="left:937px;top:537px;width:170px;background:#fff"></div>
<div class="cell" style="left:1107px;top:537px;width:100px;background:#fff"><span class="tag2">银联</span></div>
<div class="cell" style="left:1207px;top:537px;width:120px;background:#fff">2025-12-08</div>
<div class="cell" style="left:1327px;top:537px;width:110px;background:#fff"></div>
<div class="cell" style="left:1437px;top:537px;width:100px;background:#fff">2025-12-08 1</div>
<div class="cell" style="left:1537px;top:537px;width:90px;background:#fff"></div>
</div>
<div class="abs" style="left:1780px;top:224px;width:11px;height:541px;background:linear-gradient(to right,rgba(0,0,0,0),rgba(0,0,0,.03) 60%,rgba(0,0,0,.07))"></div>
<div class="abs" style="left:1790px;top:223px;width:91px;height:543px;overflow:hidden;border-left:1px solid #eaecf0;border-right:1px solid #eaecf0;border-top:1px solid #eaecf0;border-bottom:1px solid #eaecf0">
<div class="cell hcell" style="left:0;top:0;width:90px;background:#fff;border-right:none;padding-left:16px">操作</div>
<div class="cell" style="left:0;top:47px;width:90px;background:#fff;border-right:none;padding-left:16px;color:#409eff;font-size:12px">操作<svg style="margin-left:8px;position:relative;top:0px" width="10" height="6" viewBox="0 0 10 6" fill="none" stroke="#409eff" stroke-width="1"><path d="M0.5 0.5L5 5 9.5 0.5"/></svg></div>
<div class="cell" style="left:0;top:96px;width:90px;background:#fafafa;border-right:none;padding-left:16px;color:#409eff;font-size:12px">操作<svg style="margin-left:8px;position:relative;top:0px" width="10" height="6" viewBox="0 0 10 6" fill="none" stroke="#409eff" stroke-width="1"><path d="M0.5 0.5L5 5 9.5 0.5"/></svg></div>
<div class="cell" style="left:0;top:145px;width:90px;background:#fff;border-right:none;padding-left:16px;color:#409eff;font-size:12px">操作<svg style="margin-left:8px;position:relative;top:0px" width="10" height="6" viewBox="0 0 10 6" fill="none" stroke="#409eff" stroke-width="1"><path d="M0.5 0.5L5 5 9.5 0.5"/></svg></div>
<div class="cell" style="left:0;top:194px;width:90px;background:#fafafa;border-right:none;padding-left:16px;color:#409eff;font-size:12px">操作<svg style="margin-left:8px;position:relative;top:0px" width="10" height="6" viewBox="0 0 10 6" fill="none" stroke="#409eff" stroke-width="1"><path d="M0.5 0.5L5 5 9.5 0.5"/></svg></div>
<div class="cell" style="left:0;top:243px;width:90px;background:#fff;border-right:none;padding-left:16px;color:#409eff;font-size:12px">操作<svg style="margin-left:8px;position:relative;top:0px" width="10" height="6" viewBox="0 0 10 6" fill="none" stroke="#409eff" stroke-width="1"><path d="M0.5 0.5L5 5 9.5 0.5"/></svg></div>
<div class="cell" style="left:0;top:292px;width:90px;background:#fafafa;border-right:none;padding-left:16px;color:#409eff;font-size:12px">操作<svg style="margin-left:8px;position:relative;top:0px" width="10" height="6" viewBox="0 0 10 6" fill="none" stroke="#409eff" stroke-width="1"><path d="M0.5 0.5L5 5 9.5 0.5"/></svg></div>
<div class="cell" style="left:0;top:341px;width:90px;background:#fff;border-right:none;padding-left:16px;color:#409eff;font-size:12px">操作<svg style="margin-left:8px;position:relative;top:0px" width="10" height="6" viewBox="0 0 10 6" fill="none" stroke="#409eff" stroke-width="1"><path d="M0.5 0.5L5 5 9.5 0.5"/></svg></div>
<div class="cell" style="left:0;top:390px;width:90px;background:#fafafa;border-right:none;padding-left:16px;color:#409eff;font-size:12px">操作<svg style="margin-left:8px;position:relative;top:0px" width="10" height="6" viewBox="0 0 10 6" fill="none" stroke="#409eff" stroke-width="1"><path d="M0.5 0.5L5 5 9.5 0.5"/></svg></div>
<div class="cell" style="left:0;top:439px;width:90px;background:#fff;border-right:none;padding-left:16px;color:#409eff;font-size:12px">操作<svg style="margin-left:8px;position:relative;top:0px" width="10" height="6" viewBox="0 0 10 6" fill="none" stroke="#409eff" stroke-width="1"><path d="M0.5 0.5L5 5 9.5 0.5"/></svg></div>
<div class="cell" style="left:0;top:488px;width:90px;background:#fafafa;border-right:none;padding-left:16px;color:#409eff;font-size:12px">操作<svg style="margin-left:8px;position:relative;top:0px" width="10" height="6" viewBox="0 0 10 6" fill="none" stroke="#409eff" stroke-width="1"><path d="M0.5 0.5L5 5 9.5 0.5"/></svg></div>
<div class="cell" style="left:0;top:537px;width:90px;background:#fff;border-right:none;padding-left:16px;color:#409eff;font-size:12px">操作<svg style="margin-left:8px;position:relative;top:0px" width="10" height="6" viewBox="0 0 10 6" fill="none" stroke="#409eff" stroke-width="1"><path d="M0.5 0.5L5 5 9.5 0.5"/></svg></div>
</div>
<div class="abs" style="left:898px;top:285px;width:9px;height:9px;background:rgb(207,207,207)"></div><div class="abs" style="left:907px;top:285px;width:9px;height:9px;background:rgb(218,218,218)"></div><div class="abs" style="left:916px;top:285px;width:9px;height:9px;background:rgb(217,217,217)"></div><div class="abs" style="left:898px;top:294px;width:9px;height:9px;background:rgb(212,212,212)"></div><div class="abs" style="left:907px;top:294px;width:9px;height:9px;background:rgb(219,219,219)"></div><div class="abs" style="left:916px;top:294px;width:9px;height:9px;background:rgb(227,227,227)"></div>
<div class="abs" style="left:1213px;top:285px;width:9px;height:9px;background:rgb(215,215,215)"></div><div class="abs" style="left:1222px;top:285px;width:9px;height:9px;background:rgb(220,220,220)"></div><div class="abs" style="left:1231px;top:285px;width:9px;height:9px;background:rgb(218,218,218)"></div><div class="abs" style="left:1240px;top:285px;width:9px;height:9px;background:rgb(202,202,202)"></div><div class="abs" style="left:1249px;top:285px;width:9px;height:9px;background:rgb(219,219,219)"></div><div class="abs" style="left:1258px;top:285px;width:9px;height:9px;background:rgb(200,200,200)"></div><div class="abs" style="left:1267px;top:285px;width:9px;height:9px;background:rgb(215,215,215)"></div><div class="abs" style="left:1276px;top:285px;width:9px;height:9px;background:rgb(208,208,208)"></div><div class="abs" style="left:1285px;top:285px;width:9px;height:9px;background:rgb(217,217,217)"></div><div class="abs" style="left:1213px;top:294px;width:9px;height:9px;background:rgb(215,215,215)"></div><div class="abs" style="left:1222px;top:294px;width:9px;height:9px;background:rgb(214,214,214)"></div><div class="abs" style="left:1231px;top:294px;width:9px;height:9px;background:rgb(230,230,230)"></div><div class="abs" style="left:1240px;top:294px;width:9px;height:9px;background:rgb(223,223,223)"></div><div class="abs" style="left:1249px;top:294px;width:9px;height:9px;background:rgb(225,225,225)"></div><div class="abs" style="left:1258px;top:294px;width:9px;height:9px;background:rgb(225,225,225)"></div><div class="abs" style="left:1267px;top:294px;width:9px;height:9px;background:rgb(223,223,223)"></div><div class="abs" style="left:1276px;top:294px;width:9px;height:9px;background:rgb(220,220,220)"></div><div class="abs" style="left:1285px;top:294px;width:9px;height:9px;background:rgb(228,228,228)"></div>
<div class="abs" style="left:898px;top:334px;width:9px;height:9px;background:rgb(204,204,204)"></div><div class="abs" style="left:907px;top:334px;width:9px;height:9px;background:rgb(207,207,207)"></div><div class="abs" style="left:916px;top:334px;width:9px;height:9px;background:rgb(220,220,220)"></div><div class="abs" style="left:898px;top:343px;width:9px;height:9px;background:rgb(212,212,212)"></div><div class="abs" style="left:907px;top:343px;width:9px;height:9px;background:rgb(224,224,224)"></div><div class="abs" style="left:916px;top:343px;width:9px;height:9px;background:rgb(220,220,220)"></div>
<div class="abs" style="left:1205px;top:334px;width:9px;height:9px;background:rgb(223,223,223)"></div><div class="abs" style="left:1214px;top:334px;width:9px;height:9px;background:rgb(200,200,200)"></div><div class="abs" style="left:1223px;top:334px;width:9px;height:9px;background:rgb(221,221,221)"></div><div class="abs" style="left:1232px;top:334px;width:9px;height:9px;background:rgb(224,224,224)"></div><div class="abs" style="left:1241px;top:334px;width:9px;height:9px;background:rgb(202,202,202)"></div><div class="abs" style="left:1250px;top:334px;width:9px;height:9px;background:rgb(205,205,205)"></div><div class="abs" style="left:1259px;top:334px;width:9px;height:9px;background:rgb(224,224,224)"></div><div class="abs" style="left:1268px;top:334px;width:9px;height:9px;background:rgb(218,218,218)"></div><div class="abs" style="left:1277px;top:334px;width:9px;height:9px;background:rgb(201,201,201)"></div><div class="abs" style="left:1286px;top:334px;width:9px;height:9px;background:rgb(209,209,209)"></div><div class="abs" style="left:1295px;top:334px;width:9px;height:9px;background:rgb(224,224,224)"></div><div class="abs" style="left:1304px;top:334px;width:9px;height:9px;background:rgb(200,200,200)"></div><div class="abs" style="left:1313px;top:334px;width:9px;height:9px;background:rgb(208,208,208)"></div><div class="abs" style="left:1205px;top:343px;width:9px;height:9px;background:rgb(223,223,223)"></div><div class="abs" style="left:1214px;top:343px;width:9px;height:9px;background:rgb(227,227,227)"></div><div class="abs" style="left:1223px;top:343px;width:9px;height:9px;background:rgb(231,231,231)"></div><div class="abs" style="left:1232px;top:343px;width:9px;height:9px;background:rgb(220,220,220)"></div><div class="abs" style="left:1241px;top:343px;width:9px;height:9px;background:rgb(230,230,230)"></div><div class="abs" style="left:1250px;top:343px;width:9px;height:9px;background:rgb(221,221,221)"></div><div class="abs" style="left:1259px;top:343px;width:9px;height:9px;background:rgb(220,220,220)"></div><div class="abs" style="left:1268px;top:343px;width:9px;height:9px;background:rgb(231,231,231)"></div><div class="abs" style="left:1277px;top:343px;width:9px;height:9px;background:rgb(226,226,226)"></div><div class="abs" style="left:1286px;top:343px;width:9px;height:9px;background:rgb(222,222,222)"></div><div class="abs" style="left:1295px;top:343px;width:9px;height:9px;background:rgb(212,212,212)"></div><div class="abs" style="left:1304px;top:343px;width:9px;height:9px;background:rgb(219,219,219)"></div><div class="abs" style="left:1313px;top:343px;width:9px;height:9px;background:rgb(211,211,211)"></div>
<div class="abs" style="left:898px;top:383px;width:9px;height:9px;background:rgb(201,201,201)"></div><div class="abs" style="left:907px;top:383px;width:9px;height:9px;background:rgb(204,204,204)"></div><div class="abs" style="left:916px;top:383px;width:9px;height:9px;background:rgb(215,215,215)"></div><div class="abs" style="left:898px;top:392px;width:9px;height:9px;background:rgb(214,214,214)"></div><div class="abs" style="left:907px;top:392px;width:9px;height:9px;background:rgb(216,216,216)"></div><div class="abs" style="left:916px;top:392px;width:9px;height:9px;background:rgb(229,229,229)"></div>
<div class="abs" style="left:1205px;top:383px;width:9px;height:9px;background:rgb(213,213,213)"></div><div class="abs" style="left:1214px;top:383px;width:9px;height:9px;background:rgb(224,224,224)"></div><div class="abs" style="left:1223px;top:383px;width:9px;height:9px;background:rgb(220,220,220)"></div><div class="abs" style="left:1232px;top:383px;width:9px;height:9px;background:rgb(209,209,209)"></div><div class="abs" style="left:1241px;top:383px;width:9px;height:9px;background:rgb(213,213,213)"></div><div class="abs" style="left:1250px;top:383px;width:9px;height:9px;background:rgb(216,216,216)"></div><div class="abs" style="left:1259px;top:383px;width:9px;height:9px;background:rgb(212,212,212)"></div><div class="abs" style="left:1268px;top:383px;width:9px;height:9px;background:rgb(218,218,218)"></div><div class="abs" style="left:1277px;top:383px;width:9px;height:9px;background:rgb(211,211,211)"></div><div class="abs" style="left:1286px;top:383px;width:9px;height:9px;background:rgb(217,217,217)"></div><div class="abs" style="left:1295px;top:383px;width:9px;height:9px;background:rgb(218,218,218)"></div><div class="abs" style="left:1304px;top:383px;width:9px;height:9px;background:rgb(213,213,213)"></div><div class="abs" style="left:1313px;top:383px;width:9px;height:9px;background:rgb(218,218,218)"></div><div class="abs" style="left:1322px;top:383px;width:9px;height:9px;background:rgb(207,207,207)"></div><div class="abs" style="left:1205px;top:392px;width:9px;height:9px;background:rgb(218,218,218)"></div><div class="abs" style="left:1214px;top:392px;width:9px;height:9px;background:rgb(229,229,229)"></div><div class="abs" style="left:1223px;top:392px;width:9px;height:9px;background:rgb(208,208,208)"></div><div class="abs" style="left:1232px;top:392px;width:9px;height:9px;background:rgb(216,216,216)"></div><div class="abs" style="left:1241px;top:392px;width:9px;height:9px;background:rgb(227,227,227)"></div><div class="abs" style="left:1250px;top:392px;width:9px;height:9px;background:rgb(229,229,229)"></div><div class="abs" style="left:1259px;top:392px;width:9px;height:9px;background:rgb(230,230,230)"></div><div class="abs" style="left:1268px;top:392px;width:9px;height:9px;background:rgb(213,213,213)"></div><div class="abs" style="left:1277px;top:392px;width:9px;height:9px;background:rgb(230,230,230)"></div><div class="abs" style="left:1286px;top:392px;width:9px;height:9px;background:rgb(218,218,218)"></div><div class="abs" style="left:1295px;top:392px;width:9px;height:9px;background:rgb(225,225,225)"></div><div class="abs" style="left:1304px;top:392px;width:9px;height:9px;background:rgb(226,226,226)"></div><div class="abs" style="left:1313px;top:392px;width:9px;height:9px;background:rgb(226,226,226)"></div><div class="abs" style="left:1322px;top:392px;width:9px;height:9px;background:rgb(211,211,211)"></div>
<div class="abs" style="left:898px;top:432px;width:9px;height:9px;background:rgb(222,222,222)"></div><div class="abs" style="left:907px;top:432px;width:9px;height:9px;background:rgb(220,220,220)"></div><div class="abs" style="left:916px;top:432px;width:9px;height:9px;background:rgb(206,206,206)"></div><div class="abs" style="left:898px;top:441px;width:9px;height:9px;background:rgb(228,228,228)"></div><div class="abs" style="left:907px;top:441px;width:9px;height:9px;background:rgb(226,226,226)"></div><div class="abs" style="left:916px;top:441px;width:9px;height:9px;background:rgb(216,216,216)"></div>
<div class="abs" style="left:1205px;top:432px;width:9px;height:9px;background:rgb(209,209,209)"></div><div class="abs" style="left:1214px;top:432px;width:9px;height:9px;background:rgb(203,203,203)"></div><div class="abs" style="left:1223px;top:432px;width:9px;height:9px;background:rgb(202,202,202)"></div><div class="abs" style="left:1232px;top:432px;width:9px;height:9px;background:rgb(215,215,215)"></div><div class="abs" style="left:1241px;top:432px;width:9px;height:9px;background:rgb(220,220,220)"></div><div class="abs" style="left:1250px;top:432px;width:9px;height:9px;background:rgb(215,215,215)"></div><div class="abs" style="left:1259px;top:432px;width:9px;height:9px;background:rgb(202,202,202)"></div><div class="abs" style="left:1268px;top:432px;width:9px;height:9px;background:rgb(211,211,211)"></div><div class="abs" style="left:1277px;top:432px;width:9px;height:9px;background:rgb(202,202,202)"></div><div class="abs" style="left:1286px;top:432px;width:9px;height:9px;background:rgb(213,213,213)"></div><div class="abs" style="left:1295px;top:432px;width:9px;height:9px;background:rgb(204,204,204)"></div><div class="abs" style="left:1304px;top:432px;width:9px;height:9px;background:rgb(200,200,200)"></div><div class="abs" style="left:1313px;top:432px;width:9px;height:9px;background:rgb(209,209,209)"></div><div class="abs" style="left:1322px;top:432px;width:9px;height:9px;background:rgb(213,213,213)"></div><div class="abs" style="left:1205px;top:441px;width:9px;height:9px;background:rgb(232,232,232)"></div><div class="abs" style="left:1214px;top:441px;width:9px;height:9px;background:rgb(221,221,221)"></div><div class="abs" style="left:1223px;top:441px;width:9px;height:9px;background:rgb(211,211,211)"></div><div class="abs" style="left:1232px;top:441px;width:9px;height:9px;background:rgb(209,209,209)"></div><div class="abs" style="left:1241px;top:441px;width:9px;height:9px;background:rgb(227,227,227)"></div><div class="abs" style="left:1250px;top:441px;width:9px;height:9px;background:rgb(227,227,227)"></div><div class="abs" style="left:1259px;top:441px;width:9px;height:9px;background:rgb(232,232,232)"></div><div class="abs" style="left:1268px;top:441px;width:9px;height:9px;background:rgb(209,209,209)"></div><div class="abs" style="left:1277px;top:441px;width:9px;height:9px;background:rgb(220,220,220)"></div><div class="abs" style="left:1286px;top:441px;width:9px;height:9px;background:rgb(230,230,230)"></div><div class="abs" style="left:1295px;top:441px;width:9px;height:9px;background:rgb(226,226,226)"></div><div class="abs" style="left:1304px;top:441px;width:9px;height:9px;background:rgb(218,218,218)"></div><div class="abs" style="left:1313px;top:441px;width:9px;height:9px;background:rgb(225,225,225)"></div><div class="abs" style="left:1322px;top:441px;width:9px;height:9px;background:rgb(216,216,216)"></div>
<div class="abs" style="left:898px;top:481px;width:9px;height:9px;background:rgb(216,216,216)"></div><div class="abs" style="left:907px;top:481px;width:9px;height:9px;background:rgb(207,207,207)"></div><div class="abs" style="left:916px;top:481px;width:9px;height:9px;background:rgb(201,201,201)"></div><div class="abs" style="left:898px;top:490px;width:9px;height:9px;background:rgb(217,217,217)"></div><div class="abs" style="left:907px;top:490px;width:9px;height:9px;background:rgb(208,208,208)"></div><div class="abs" style="left:916px;top:490px;width:9px;height:9px;background:rgb(210,210,210)"></div>
<div class="abs" style="left:1205px;top:481px;width:9px;height:9px;background:rgb(203,203,203)"></div><div class="abs" style="left:1214px;top:481px;width:9px;height:9px;background:rgb(219,219,219)"></div><div class="abs" style="left:1223px;top:481px;width:9px;height:9px;background:rgb(217,217,217)"></div><div class="abs" style="left:1232px;top:481px;width:9px;height:9px;background:rgb(201,201,201)"></div><div class="abs" style="left:1241px;top:481px;width:9px;height:9px;background:rgb(206,206,206)"></div><div class="abs" style="left:1250px;top:481px;width:9px;height:9px;background:rgb(213,213,213)"></div><div class="abs" style="left:1259px;top:481px;width:9px;height:9px;background:rgb(209,209,209)"></div><div class="abs" style="left:1268px;top:481px;width:9px;height:9px;background:rgb(219,219,219)"></div><div class="abs" style="left:1277px;top:481px;width:9px;height:9px;background:rgb(208,208,208)"></div><div class="abs" style="left:1286px;top:481px;width:9px;height:9px;background:rgb(204,204,204)"></div><div class="abs" style="left:1295px;top:481px;width:9px;height:9px;background:rgb(222,222,222)"></div><div class="abs" style="left:1304px;top:481px;width:9px;height:9px;background:rgb(201,201,201)"></div><div class="abs" style="left:1313px;top:481px;width:9px;height:9px;background:rgb(210,210,210)"></div><div class="abs" style="left:1322px;top:481px;width:9px;height:9px;background:rgb(210,210,210)"></div><div class="abs" style="left:1205px;top:490px;width:9px;height:9px;background:rgb(219,219,219)"></div><div class="abs" style="left:1214px;top:490px;width:9px;height:9px;background:rgb(212,212,212)"></div><div class="abs" style="left:1223px;top:490px;width:9px;height:9px;background:rgb(220,220,220)"></div><div class="abs" style="left:1232px;top:490px;width:9px;height:9px;background:rgb(220,220,220)"></div><div class="abs" style="left:1241px;top:490px;width:9px;height:9px;background:rgb(222,222,222)"></div><div class="abs" style="left:1250px;top:490px;width:9px;height:9px;background:rgb(224,224,224)"></div><div class="abs" style="left:1259px;top:490px;width:9px;height:9px;background:rgb(220,220,220)"></div><div class="abs" style="left:1268px;top:490px;width:9px;height:9px;background:rgb(228,228,228)"></div><div class="abs" style="left:1277px;top:490px;width:9px;height:9px;background:rgb(227,227,227)"></div><div class="abs" style="left:1286px;top:490px;width:9px;height:9px;background:rgb(229,229,229)"></div><div class="abs" style="left:1295px;top:490px;width:9px;height:9px;background:rgb(225,225,225)"></div><div class="abs" style="left:1304px;top:490px;width:9px;height:9px;background:rgb(211,211,211)"></div><div class="abs" style="left:1313px;top:490px;width:9px;height:9px;background:rgb(227,227,227)"></div><div class="abs" style="left:1322px;top:490px;width:9px;height:9px;background:rgb(224,224,224)"></div>
<div class="abs" style="left:898px;top:530px;width:9px;height:9px;background:rgb(208,208,208)"></div><div class="abs" style="left:907px;top:530px;width:9px;height:9px;background:rgb(213,213,213)"></div><div class="abs" style="left:916px;top:530px;width:9px;height:9px;background:rgb(220,220,220)"></div><div class="abs" style="left:898px;top:539px;width:9px;height:9px;background:rgb(231,231,231)"></div><div class="abs" style="left:907px;top:539px;width:9px;height:9px;background:rgb(230,230,230)"></div><div class="abs" style="left:916px;top:539px;width:9px;height:9px;background:rgb(215,215,215)"></div>
<div class="abs" style="left:1205px;top:530px;width:9px;height:9px;background:rgb(209,209,209)"></div><div class="abs" style="left:1214px;top:530px;width:9px;height:9px;background:rgb(213,213,213)"></div><div class="abs" style="left:1223px;top:530px;width:9px;height:9px;background:rgb(208,208,208)"></div><div class="abs" style="left:1232px;top:530px;width:9px;height:9px;background:rgb(216,216,216)"></div><div class="abs" style="left:1241px;top:530px;width:9px;height:9px;background:rgb(209,209,209)"></div><div class="abs" style="left:1250px;top:530px;width:9px;height:9px;background:rgb(217,217,217)"></div><div class="abs" style="left:1259px;top:530px;width:9px;height:9px;background:rgb(210,210,210)"></div><div class="abs" style="left:1268px;top:530px;width:9px;height:9px;background:rgb(200,200,200)"></div><div class="abs" style="left:1277px;top:530px;width:9px;height:9px;background:rgb(213,213,213)"></div><div class="abs" style="left:1286px;top:530px;width:9px;height:9px;background:rgb(218,218,218)"></div><div class="abs" style="left:1295px;top:530px;width:9px;height:9px;background:rgb(210,210,210)"></div><div class="abs" style="left:1304px;top:530px;width:9px;height:9px;background:rgb(200,200,200)"></div><div class="abs" style="left:1313px;top:530px;width:9px;height:9px;background:rgb(212,212,212)"></div><div class="abs" style="left:1322px;top:530px;width:9px;height:9px;background:rgb(219,219,219)"></div><div class="abs" style="left:1205px;top:539px;width:9px;height:9px;background:rgb(226,226,226)"></div><div class="abs" style="left:1214px;top:539px;width:9px;height:9px;background:rgb(228,228,228)"></div><div class="abs" style="left:1223px;top:539px;width:9px;height:9px;background:rgb(212,212,212)"></div><div class="abs" style="left:1232px;top:539px;width:9px;height:9px;background:rgb(209,209,209)"></div><div class="abs" style="left:1241px;top:539px;width:9px;height:9px;background:rgb(228,228,228)"></div><div class="abs" style="left:1250px;top:539px;width:9px;height:9px;background:rgb(228,228,228)"></div><div class="abs" style="left:1259px;top:539px;width:9px;height:9px;background:rgb(218,218,218)"></div><div class="abs" style="left:1268px;top:539px;width:9px;height:9px;background:rgb(222,222,222)"></div><div class="abs" style="left:1277px;top:539px;width:9px;height:9px;background:rgb(219,219,219)"></div><div class="abs" style="left:1286px;top:539px;width:9px;height:9px;background:rgb(229,229,229)"></div><div class="abs" style="left:1295px;top:539px;width:9px;height:9px;background:rgb(219,219,219)"></div><div class="abs" style="left:1304px;top:539px;width:9px;height:9px;background:rgb(227,227,227)"></div><div class="abs" style="left:1313px;top:539px;width:9px;height:9px;background:rgb(230,230,230)"></div><div class="abs" style="left:1322px;top:539px;width:9px;height:9px;background:rgb(216,216,216)"></div>
<div class="abs" style="left:898px;top:579px;width:9px;height:9px;background:rgb(223,223,223)"></div><div class="abs" style="left:907px;top:579px;width:9px;height:9px;background:rgb(215,215,215)"></div><div class="abs" style="left:916px;top:579px;width:9px;height:9px;background:rgb(200,200,200)"></div><div class="abs" style="left:898px;top:588px;width:9px;height:9px;background:rgb(226,226,226)"></div><div class="abs" style="left:907px;top:588px;width:9px;height:9px;background:rgb(209,209,209)"></div><div class="abs" style="left:916px;top:588px;width:9px;height:9px;background:rgb(229,229,229)"></div>
<div class="abs" style="left:1205px;top:579px;width:9px;height:9px;background:rgb(200,200,200)"></div><div class="abs" style="left:1214px;top:579px;width:9px;height:9px;background:rgb(211,211,211)"></div><div class="abs" style="left:1223px;top:579px;width:9px;height:9px;background:rgb(208,208,208)"></div><div class="abs" style="left:1232px;top:579px;width:9px;height:9px;background:rgb(220,220,220)"></div><div class="abs" style="left:1241px;top:579px;width:9px;height:9px;background:rgb(214,214,214)"></div><div class="abs" style="left:1250px;top:579px;width:9px;height:9px;background:rgb(209,209,209)"></div><div class="abs" style="left:1259px;top:579px;width:9px;height:9px;background:rgb(218,218,218)"></div><div class="abs" style="left:1268px;top:579px;width:9px;height:9px;background:rgb(219,219,219)"></div><div class="abs" style="left:1277px;top:579px;width:9px;height:9px;background:rgb(210,210,210)"></div><div class="abs" style="left:1286px;top:579px;width:9px;height:9px;background:rgb(205,205,205)"></div><div class="abs" style="left:1295px;top:579px;width:9px;height:9px;background:rgb(211,211,211)"></div><div class="abs" style="left:1304px;top:579px;width:9px;height:9px;background:rgb(205,205,205)"></div><div class="abs" style="left:1313px;top:579px;width:9px;height:9px;background:rgb(210,210,210)"></div><div class="abs" style="left:1322px;top:579px;width:9px;height:9px;background:rgb(224,224,224)"></div><div class="abs" style="left:1205px;top:588px;width:9px;height:9px;background:rgb(219,219,219)"></div><div class="abs" style="left:1214px;top:588px;width:9px;height:9px;background:rgb(227,227,227)"></div><div class="abs" style="left:1223px;top:588px;width:9px;height:9px;background:rgb(216,216,216)"></div><div class="abs" style="left:1232px;top:588px;width:9px;height:9px;background:rgb(217,217,217)"></div><div class="abs" style="left:1241px;top:588px;width:9px;height:9px;background:rgb(220,220,220)"></div><div class="abs" style="left:1250px;top:588px;width:9px;height:9px;background:rgb(211,211,211)"></div><div class="abs" style="left:1259px;top:588px;width:9px;height:9px;background:rgb(232,232,232)"></div><div class="abs" style="left:1268px;top:588px;width:9px;height:9px;background:rgb(208,208,208)"></div><div class="abs" style="left:1277px;top:588px;width:9px;height:9px;background:rgb(226,226,226)"></div><div class="abs" style="left:1286px;top:588px;width:9px;height:9px;background:rgb(229,229,229)"></div><div class="abs" style="left:1295px;top:588px;width:9px;height:9px;background:rgb(231,231,231)"></div><div class="abs" style="left:1304px;top:588px;width:9px;height:9px;background:rgb(212,212,212)"></div><div class="abs" style="left:1313px;top:588px;width:9px;height:9px;background:rgb(217,217,217)"></div><div class="abs" style="left:1322px;top:588px;width:9px;height:9px;background:rgb(224,224,224)"></div>
<div class="abs" style="left:898px;top:628px;width:9px;height:9px;background:rgb(207,207,207)"></div><div class="abs" style="left:907px;top:628px;width:9px;height:9px;background:rgb(220,220,220)"></div><div class="abs" style="left:916px;top:628px;width:9px;height:9px;background:rgb(208,208,208)"></div><div class="abs" style="left:898px;top:637px;width:9px;height:9px;background:rgb(215,215,215)"></div><div class="abs" style="left:907px;top:637px;width:9px;height:9px;background:rgb(218,218,218)"></div><div class="abs" style="left:916px;top:637px;width:9px;height:9px;background:rgb(213,213,213)"></div>
<div class="abs" style="left:1208px;top:628px;width:9px;height:9px;background:rgb(221,221,221)"></div><div class="abs" style="left:1217px;top:628px;width:9px;height:9px;background:rgb(213,213,213)"></div><div class="abs" style="left:1226px;top:628px;width:9px;height:9px;background:rgb(220,220,220)"></div><div class="abs" style="left:1235px;top:628px;width:9px;height:9px;background:rgb(222,222,222)"></div><div class="abs" style="left:1244px;top:628px;width:9px;height:9px;background:rgb(203,203,203)"></div><div class="abs" style="left:1253px;top:628px;width:9px;height:9px;background:rgb(203,203,203)"></div><div class="abs" style="left:1262px;top:628px;width:9px;height:9px;background:rgb(219,219,219)"></div><div class="abs" style="left:1271px;top:628px;width:9px;height:9px;background:rgb(210,210,210)"></div><div class="abs" style="left:1280px;top:628px;width:9px;height:9px;background:rgb(210,210,210)"></div><div class="abs" style="left:1289px;top:628px;width:9px;height:9px;background:rgb(221,221,221)"></div><div class="abs" style="left:1298px;top:628px;width:9px;height:9px;background:rgb(207,207,207)"></div><div class="abs" style="left:1307px;top:628px;width:9px;height:9px;background:rgb(214,214,214)"></div><div class="abs" style="left:1316px;top:628px;width:9px;height:9px;background:rgb(205,205,205)"></div><div class="abs" style="left:1325px;top:628px;width:9px;height:9px;background:rgb(202,202,202)"></div><div class="abs" style="left:1208px;top:637px;width:9px;height:9px;background:rgb(218,218,218)"></div><div class="abs" style="left:1217px;top:637px;width:9px;height:9px;background:rgb(231,231,231)"></div><div class="abs" style="left:1226px;top:637px;width:9px;height:9px;background:rgb(228,228,228)"></div><div class="abs" style="left:1235px;top:637px;width:9px;height:9px;background:rgb(214,214,214)"></div><div class="abs" style="left:1244px;top:637px;width:9px;height:9px;background:rgb(226,226,226)"></div><div class="abs" style="left:1253px;top:637px;width:9px;height:9px;background:rgb(222,222,222)"></div><div class="abs" style="left:1262px;top:637px;width:9px;height:9px;background:rgb(216,216,216)"></div><div class="abs" style="left:1271px;top:637px;width:9px;height:9px;background:rgb(215,215,215)"></div><div class="abs" style="left:1280px;top:637px;width:9px;height:9px;background:rgb(211,211,211)"></div><div class="abs" style="left:1289px;top:637px;width:9px;height:9px;background:rgb(209,209,209)"></div><div class="abs" style="left:1298px;top:637px;width:9px;height:9px;background:rgb(224,224,224)"></div><div class="abs" style="left:1307px;top:637px;width:9px;height:9px;background:rgb(214,214,214)"></div><div class="abs" style="left:1316px;top:637px;width:9px;height:9px;background:rgb(218,218,218)"></div><div class="abs" style="left:1325px;top:637px;width:9px;height:9px;background:rgb(226,226,226)"></div>
<div class="abs" style="left:898px;top:677px;width:9px;height:9px;background:rgb(205,205,205)"></div><div class="abs" style="left:907px;top:677px;width:9px;height:9px;background:rgb(208,208,208)"></div><div class="abs" style="left:916px;top:677px;width:9px;height:9px;background:rgb(210,210,210)"></div><div class="abs" style="left:898px;top:686px;width:9px;height:9px;background:rgb(228,228,228)"></div><div class="abs" style="left:907px;top:686px;width:9px;height:9px;background:rgb(210,210,210)"></div><div class="abs" style="left:916px;top:686px;width:9px;height:9px;background:rgb(227,227,227)"></div>
<div class="abs" style="left:1210px;top:677px;width:9px;height:9px;background:rgb(211,211,211)"></div><div class="abs" style="left:1219px;top:677px;width:9px;height:9px;background:rgb(218,218,218)"></div><div class="abs" style="left:1228px;top:677px;width:9px;height:9px;background:rgb(204,204,204)"></div><div class="abs" style="left:1237px;top:677px;width:9px;height:9px;background:rgb(213,213,213)"></div><div class="abs" style="left:1246px;top:677px;width:9px;height:9px;background:rgb(209,209,209)"></div><div class="abs" style="left:1255px;top:677px;width:9px;height:9px;background:rgb(216,216,216)"></div><div class="abs" style="left:1264px;top:677px;width:9px;height:9px;background:rgb(208,208,208)"></div><div class="abs" style="left:1273px;top:677px;width:9px;height:9px;background:rgb(214,214,214)"></div><div class="abs" style="left:1282px;top:677px;width:9px;height:9px;background:rgb(211,211,211)"></div><div class="abs" style="left:1291px;top:677px;width:9px;height:9px;background:rgb(220,220,220)"></div><div class="abs" style="left:1300px;top:677px;width:9px;height:9px;background:rgb(213,213,213)"></div><div class="abs" style="left:1309px;top:677px;width:9px;height:9px;background:rgb(209,209,209)"></div><div class="abs" style="left:1318px;top:677px;width:9px;height:9px;background:rgb(213,213,213)"></div><div class="abs" style="left:1327px;top:677px;width:9px;height:9px;background:rgb(218,218,218)"></div><div class="abs" style="left:1210px;top:686px;width:9px;height:9px;background:rgb(221,221,221)"></div><div class="abs" style="left:1219px;top:686px;width:9px;height:9px;background:rgb(209,209,209)"></div><div class="abs" style="left:1228px;top:686px;width:9px;height:9px;background:rgb(221,221,221)"></div><div class="abs" style="left:1237px;top:686px;width:9px;height:9px;background:rgb(212,212,212)"></div><div class="abs" style="left:1246px;top:686px;width:9px;height:9px;background:rgb(214,214,214)"></div><div class="abs" style="left:1255px;top:686px;width:9px;height:9px;background:rgb(208,208,208)"></div><div class="abs" style="left:1264px;top:686px;width:9px;height:9px;background:rgb(223,223,223)"></div><div class="abs" style="left:1273px;top:686px;width:9px;height:9px;background:rgb(227,227,227)"></div><div class="abs" style="left:1282px;top:686px;width:9px;height:9px;background:rgb(224,224,224)"></div><div class="abs" style="left:1291px;top:686px;width:9px;height:9px;background:rgb(221,221,221)"></div><div class="abs" style="left:1300px;top:686px;width:9px;height:9px;background:rgb(225,225,225)"></div><div class="abs" style="left:1309px;top:686px;width:9px;height:9px;background:rgb(230,230,230)"></div><div class="abs" style="left:1318px;top:686px;width:9px;height:9px;background:rgb(215,215,215)"></div><div class="abs" style="left:1327px;top:686px;width:9px;height:9px;background:rgb(209,209,209)"></div>
<div class="abs" style="left:1206px;top:286px;line-height:16px;font-size:14px;color:#606266">夭</div>
<div class="abs" style="left:1213px;top:285px;width:9px;height:9px;background:rgb(223,223,223)"></div><div class="abs" style="left:1222px;top:285px;width:9px;height:9px;background:rgb(214,214,214)"></div><div class="abs" style="left:1231px;top:285px;width:9px;height:9px;background:rgb(224,224,224)"></div><div class="abs" style="left:1240px;top:285px;width:9px;height:9px;background:rgb(221,221,221)"></div><div class="abs" style="left:1249px;top:285px;width:9px;height:9px;background:rgb(223,223,223)"></div><div class="abs" style="left:1258px;top:285px;width:9px;height:9px;background:rgb(216,216,216)"></div><div class="abs" style="left:1267px;top:285px;width:9px;height:9px;background:rgb(209,209,209)"></div><div class="abs" style="left:1276px;top:285px;width:9px;height:9px;background:rgb(217,217,217)"></div><div class="abs" style="left:1285px;top:285px;width:9px;height:9px;background:rgb(210,210,210)"></div><div class="abs" style="left:1213px;top:294px;width:9px;height:9px;background:rgb(215,215,215)"></div><div class="abs" style="left:1222px;top:294px;width:9px;height:9px;background:rgb(210,210,210)"></div><div class="abs" style="left:1231px;top:294px;width:9px;height:9px;background:rgb(226,226,226)"></div><div class="abs" style="left:1240px;top:294px;width:9px;height:9px;background:rgb(217,217,217)"></div><div class="abs" style="left:1249px;top:294px;width:9px;height:9px;background:rgb(211,211,211)"></div><div class="abs" style="left:1258px;top:294px;width:9px;height:9px;background:rgb(215,215,215)"></div><div class="abs" style="left:1267px;top:294px;width:9px;height:9px;background:rgb(209,209,209)"></div><div class="abs" style="left:1276px;top:294px;width:9px;height:9px;background:rgb(209,209,209)"></div><div class="abs" style="left:1285px;top:294px;width:9px;height:9px;background:rgb(230,230,230)"></div>
<div class="abs" style="left:1207px;top:727px;line-height:16px;font-size:14px;color:#606266;white-space:nowrap">无<span style="display:inline-block;width:44px"></span>识<span style="display:inline-block;width:36px"></span>...</div>
<div class="abs" style="left:1222px;top:726px;width:9px;height:9px;background:rgb(228,228,228)"></div><div class="abs" style="left:1231px;top:726px;width:9px;height:9px;background:rgb(208,208,208)"></div><div class="abs" style="left:1240px;top:726px;width:9px;height:9px;background:rgb(223,223,223)"></div><div class="abs" style="left:1249px;top:726px;width:9px;height:9px;background:rgb(199,199,199)"></div><div class="abs" style="left:1258px;top:726px;width:9px;height:9px;background:rgb(196,196,196)"></div><div class="abs" style="left:1222px;top:735px;width:9px;height:9px;background:rgb(234,234,234)"></div><div class="abs" style="left:1231px;top:735px;width:9px;height:9px;background:rgb(211,211,211)"></div><div class="abs" style="left:1240px;top:735px;width:9px;height:9px;background:rgb(214,214,214)"></div><div class="abs" style="left:1249px;top:735px;width:9px;height:9px;background:rgb(236,236,236)"></div><div class="abs" style="left:1258px;top:735px;width:9px;height:9px;background:rgb(223,223,223)"></div>
<div class="abs" style="left:1283px;top:726px;width:9px;height:9px;background:rgb(211,211,211)"></div><div class="abs" style="left:1292px;top:726px;width:9px;height:9px;background:rgb(197,197,197)"></div><div class="abs" style="left:1301px;top:726px;width:9px;height:9px;background:rgb(222,222,222)"></div><div class="abs" style="left:1283px;top:735px;width:9px;height:9px;background:rgb(207,207,207)"></div><div class="abs" style="left:1292px;top:735px;width:9px;height:9px;background:rgb(211,211,211)"></div><div class="abs" style="left:1301px;top:735px;width:9px;height:9px;background:rgb(225,225,225)"></div>
<div class="abs" style="left:897px;top:726px;width:18px;height:5px;background:#dedede"></div>
<div class="abs" style="left:897px;top:727px;line-height:16px;font-size:14px;color:#606266">开票</div>
<div class="abs" style="left:253px;top:807px;line-height:18px;font-size:14px;color:#606266;white-space:nowrap">共 11265 条</div>
<div class="abs" style="left:344px;top:796px;width:128px;height:40px;border:1px solid #dcdfe6;border-radius:4px;background:#fff"><div class="abs" style="left:14px;top:0;line-height:38px;font-size:14px;color:#606266">20条/页</div><svg class="abs" style="left:99px;top:16px" width="10" height="6" viewBox="0 0 10 6" fill="none" stroke="#a8abb2" stroke-width="1"><path d="M0.5 0.5L5 5 9.5 0.5"/></svg></div>
<div class="pg" style="left:488px;background:#f4f4f5"><svg style="position:relative;top:0px" width="6" height="10" viewBox="0 0 6 10" fill="none" stroke="#c0c4cc" stroke-width="1"><path d="M5 0.5L0.8 5 5 9.5"/></svg></div>
<div class="pg" style="left:536px;background:#409eff;color:#fff;font-weight:bold">1</div>
<div class="pg" style="left:584px">2</div>
<div class="pg" style="left:632px">3</div>
<div class="pg" style="left:680px">4</div>
<div class="pg" style="left:728px"><svg style="position:relative;top:-2px" width="12" height="4" viewBox="0 0 12 4" fill="#303133"><circle cx="1.6" cy="2" r="1.5"/><circle cx="6" cy="2" r="1.5"/><circle cx="10.4" cy="2" r="1.5"/></svg></div>
<div class="pg" style="left:776px">564</div>
<div class="pg" style="left:824px"><svg style="position:relative;top:0px" width="6" height="10" viewBox="0 0 6 10" fill="none" stroke="#303133" stroke-width="1"><path d="M1 0.5L5.2 5 1 9.5"/></svg></div>
<div class="abs" style="left:884px;top:807px;line-height:18px;font-size:14px;color:#606266">前往</div>
<div class="abs" style="left:920px;top:796px;width:56px;height:40px;border:1px solid #dcdfe6;border-radius:4px;background:#fff;text-align:center;line-height:38px;font-size:14px;color:#606266">1</div>
<div class="abs" style="left:992px;top:807px;line-height:18px;font-size:14px;color:#606266">页</div>
<div class="abs" style="left:803px;top:873px;line-height:18px;font-size:14px;color:#303133;white-space:nowrap">技术支持:<span style="color:#c4692e">江苏新开软件有限公司</span><span style="display:inline-block;width:10px"></span><span style="color:#3c6fd9;letter-spacing:0.24px">https://xinkaisoft.com</span><span style="margin-left:5px">联系人:</span><span style="color:#3c6fd9">吴先生,18862757669</span></div>
</body></html>
